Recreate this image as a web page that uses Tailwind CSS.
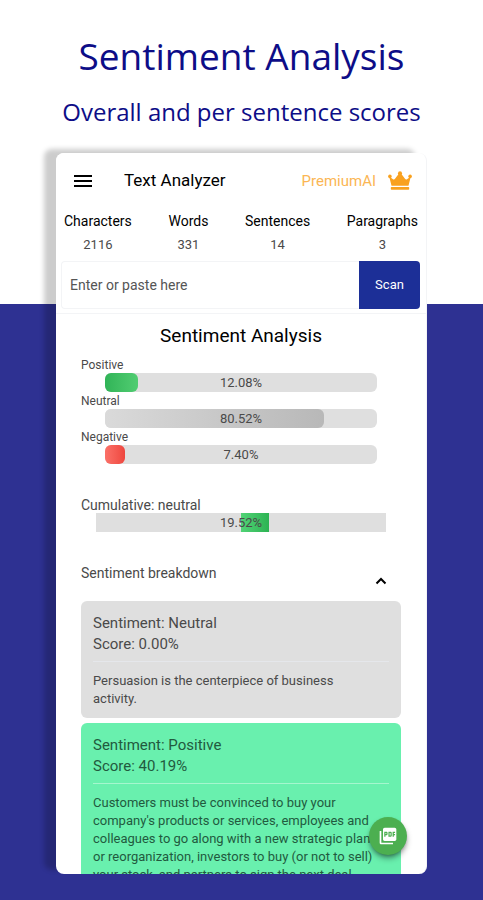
<!DOCTYPE html>
<html lang="en">
<head>
    <meta charset="UTF-8">
    <meta name="viewport" content="width=device-width, initial-scale=1.0">
    <title>Text Analyzer - Sentiment Analysis</title>
    <script src="https://cdn.jsdelivr.net/npm/@tailwindcss/browser@4"></script>
</head>

<body class="flex flex-col h-screen overflow-hidden bg-[linear-gradient(to_bottom,#ffffff_304px,#2e3192_304px)] font-['Roboto','Liberation_Sans',sans-serif] text-[#4a4a4a]">
    <!-- Headline -->
    <div class="pt-8 pb-[17px] text-center text-[#0d0d87] font-['Open_Sans','Noto_Sans',sans-serif]">
        <h1 class="text-[37px] leading-12">Sentiment Analysis</h1>
        <h2 class="mt-2 text-2xl leading-12 whitespace-nowrap">Overall and per sentence scores</h2>
    </div>

    <!-- App screen -->
    <div class="relative flex-1 min-h-0 mx-14 mb-[26px] rounded-lg shadow-[-12px_-4px_5px_rgba(0,0,0,0.2)]">
        <div class="h-full overflow-hidden rounded-lg bg-white border-r border-gray-100">
            <!-- Navbar -->
            <nav class="flex items-center h-14 pl-[18px] pr-3.5 text-black">
                <button aria-label="Menu">
                    <svg class="size-[18px]" viewBox="0 0 18 18" fill="currentColor">
                        <path d="M0 3h18v2H0zM0 8h18v2H0zM0 13h18v2H0z" />
                    </svg>
                </button>
                <h3 class="ml-8 text-[17px]">Text Analyzer</h3>
                <a href="#" class="flex items-center gap-3 ml-auto text-[15px] text-[#fbb654]">
                    PremiumAI
                    <svg class="w-6 h-5 text-[#f9a11f]" viewBox="0 0 24 20" fill="currentColor">
                        <circle cx="1.9" cy="5.4" r="1.8" />
                        <circle cx="12" cy="2.2" r="2" />
                        <circle cx="22.1" cy="5.4" r="1.8" />
                        <path d="M1.200 5.500 5 8.200q1.200.7 2-.4L11 2.500h2l4 5.300q.8 1.100 2 .4l3.800-2.700-2.300 9.300h-17zM3.500 16h17q.7 0 .7.7v1.300q0 .7-.7.7h-17q-.7 0-.7-.7v-1.300q0-.7.7-.7z" />
                    </svg>
                </a>
            </nav>

            <!-- Counters -->
            <dl class="flex justify-between px-2 text-center text-sm leading-6">
                <div>
                    <dt class="text-black">Characters</dt>
                    <dd class="text-[13px] leading-6">2116</dd>
                </div>
                <div>
                    <dt class="text-black">Words</dt>
                    <dd class="text-[13px] leading-6">331</dd>
                </div>
                <div>
                    <dt class="text-black">Sentences</dt>
                    <dd class="text-[13px] leading-6">14</dd>
                </div>
                <div>
                    <dt class="text-black">Paragraphs</dt>
                    <dd class="text-[13px] leading-6">3</dd>
                </div>
            </dl>

            <!-- Text input -->
            <form class="flex mt-1 ml-[5px] mr-1.5 h-12">
                <input type="text" aria-label="Text to analyze" placeholder="Enter or paste here"
                    class="flex-1 min-w-0 px-2 text-sm border border-r-0 border-gray-100 rounded-l-sm placeholder:text-[#555555]">
                <button type="button" class="w-[61px] text-[13px] text-white bg-[#1c2f97] rounded-r-sm">Scan</button>
            </form>

            <section class="mt-1 px-[25px] border-t border-gray-100">
                <h3 class="pt-1.5 text-center text-[19px] leading-8 text-black">Sentiment Analysis</h3>

                <!-- Scores -->
                <div class="mt-1 pr-6 text-xs">
                    <p class="pt-0.5 leading-[15px]">Positive</p>
                    <div class="relative h-[19px] ml-6 rounded-md bg-[#dfdfdf]">
                        <div class="h-full rounded-md bg-linear-to-r from-[#30b457] to-[#51cd72]" style="width: 12.08%"></div>
                        <span class="absolute inset-0 text-center text-[13px] leading-[20px]">12.08%</span>
                    </div>
                    <p class="pt-0.5 leading-[15px]">Neutral</p>
                    <div class="relative h-[19px] ml-6 rounded-md bg-[#dfdfdf]">
                        <div class="h-full rounded-md bg-linear-to-r from-[#dadada] to-[#b8b8b8]" style="width: 80.52%"></div>
                        <span class="absolute inset-0 text-center text-[13px] leading-[20px]">80.52%</span>
                    </div>
                    <p class="pt-0.5 leading-[15px]">Negative</p>
                    <div class="relative h-[19px] ml-6 rounded-md bg-[#dfdfdf]">
                        <div class="h-full rounded-md bg-linear-to-r from-[#fb7068] to-[#ee463e]" style="width: 7.4%"></div>
                        <span class="absolute inset-0 text-center text-[13px] leading-[20px]">7.40%</span>
                    </div>
                </div>

                <!-- Cumulative score, drawn from the middle of the bar -->
                <div class="mt-8 text-sm">
                    <p class="pt-0.5 leading-[15px]">Cumulative: neutral</p>
                    <div class="relative h-[19px] mx-[15px] bg-[#dfdfdf]">
                        <div class="h-full ml-[50%] bg-linear-to-r from-[#51d376] to-[#2cb353]" style="width: 9.76%"></div>
                        <span class="absolute inset-0 text-center text-[13px] leading-[20px]">19.52%</span>
                    </div>
                </div>

                <!-- Breakdown -->
                <button class="flex items-start justify-between w-full mt-[33px] h-9 pr-3.5 text-sm leading-4">
                    Sentiment breakdown
                    <svg class="size-3 mt-2.5 text-black" viewBox="0 0 12 12" fill="none" stroke="currentColor" stroke-width="2">
                        <path d="M1.5 8.5 6 4l4.5 4.5" />
                    </svg>
                </button>

                <article class="px-3 pt-3 pb-2.5 rounded-md bg-[#dfdfdf]">
                    <h4 class="text-[15px] leading-[21px]">Sentiment: Neutral<br>Score: 0.00%</h4>
                    <hr class="mt-1.5 mb-2.5 border-gray-200">
                    <p class="pr-3 text-[13px] leading-[18px]">Persuasion is the centerpiece of business activity.</p>
                </article>
                <article class="px-3 pt-3 pb-2.5 mt-[5px] rounded-md bg-[#69f0ae] text-[#225a3e]">
                    <h4 class="text-[15px] leading-[21px]">Sentiment: Positive<br>Score: 40.19%</h4>
                    <hr class="mt-1.5 mb-2.5 border-[#a5f6ce]">
                    <p class="pr-3 text-[13px] leading-[18px]">Customers must be convinced to buy your company's products or services, employees and colleagues to go along with a new strategic plan or reorganization, investors to buy (or not to sell) your stock, and partners to sign the next deal.</p>
                </article>
            </section>
        </div>

        <!-- Export button -->
        <button aria-label="Export PDF" class="absolute right-5 bottom-[19px] flex items-center justify-center size-[38px] rounded-full bg-[#4caf50] shadow-md shadow-black/40">
            <svg class="size-5" viewBox="0 0 24 24" fill="#ffffff">
                <path d="M20 2H8c-1.1 0-2 .9-2 2v12c0 1.100.9 2 2 2h12c1.100 0 2-.9 2-2V4c0-1.100-.9-2-2-2zm-8.500 7.500c0 .83-.67 1.500-1.500 1.500H9v2H7.500V7H10c.83 0 1.500.67 1.500 1.500v1zm5 2c0 .83-.67 1.500-1.500 1.500h-2.500V7H15c.83 0 1.500.67 1.500 1.500v3zm4-3H19v1h1.500V11H19v2h-1.500V7h3v1.500zM9 9.500h1v-1H9v1zM4 6H2v14c0 1.100.9 2 2 2h14v-2H4V6zm10 5.500h1v-3h-1v3z" />
            </svg>
        </button>
    </div>
</body>
</html>
